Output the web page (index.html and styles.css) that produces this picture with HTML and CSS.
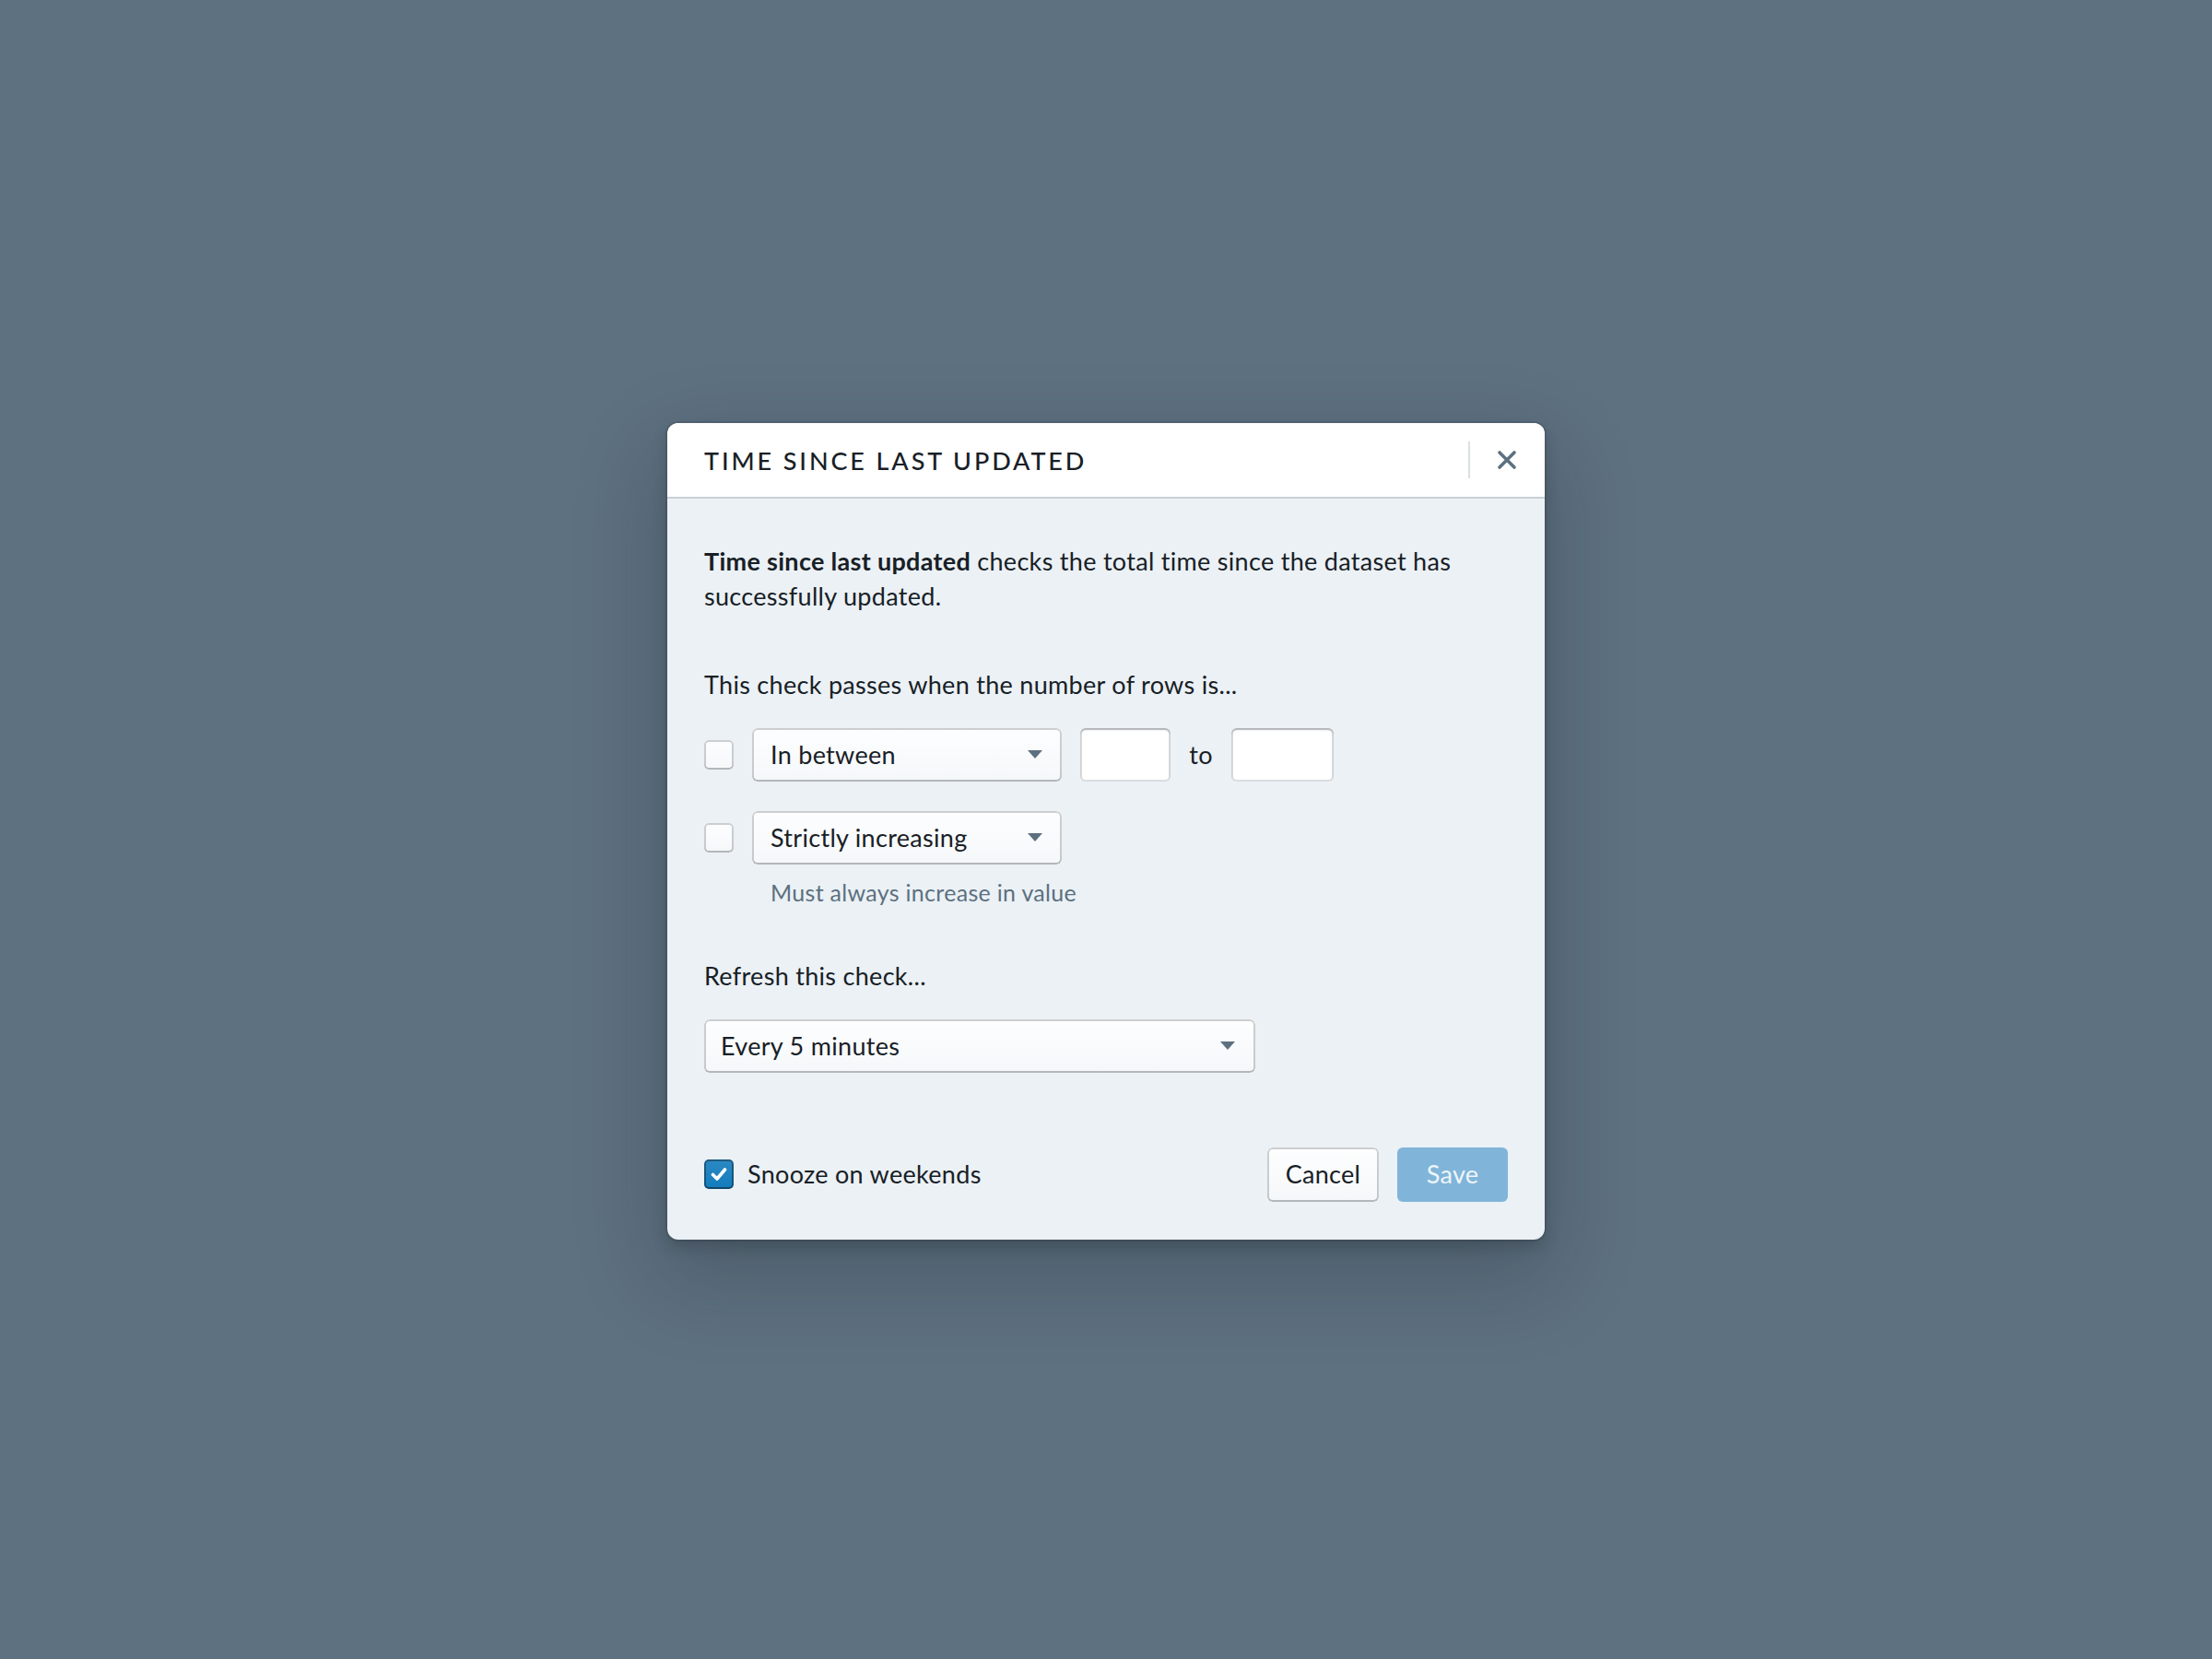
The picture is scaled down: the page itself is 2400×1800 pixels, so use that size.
FILE: index.html
```html
<!DOCTYPE html>
<html>
<head>
    <meta charset="utf-8" />
    <title>Time since last updated</title>
    <meta name="viewport" content="width=device-width, initial-scale=1">
    <link rel="stylesheet" href="styles.css">
</head>
<body>
    <div class="dialog">
        <div class="dialog-header">
            <div class="dialog-title">TIME SINCE LAST UPDATED</div>
            <div class="header-divider"></div>
            <div class="close-btn">
                <svg width="22" height="22" viewBox="0 0 22 22">
                    <path d="M3 3 L19 19 M19 3 L3 19" stroke="#5c7080" stroke-width="3.6" stroke-linecap="round" fill="none"/>
                </svg>
            </div>
        </div>
        <div class="dialog-body">
            <p class="intro"><b>Time since last updated</b> checks the total time since the dataset has successfully updated.</p>

            <div class="label first">This check passes when the number of rows is...</div>

            <div class="check-row">
                <span class="checkbox"></span>
                <div class="select">
                    <span>In between</span>
                    <span class="caret"></span>
                </div>
                <div class="input small"></div>
                <span class="to">to</span>
                <div class="input medium"></div>
            </div>
            <div class="check-row second">
                <span class="checkbox"></span>
                <div class="select">
                    <span>Strictly increasing</span>
                    <span class="caret"></span>
                </div>
            </div>
            <div class="help">Must always increase in value</div>

            <div class="label refresh">Refresh this check...</div>
            <div class="select wide">
                <span>Every 5 minutes</span>
                <span class="caret"></span>
            </div>

            <div class="dialog-footer">
                <div class="snooze">
                    <span class="checkbox checked">
                        <svg width="22" height="22" viewBox="0 0 22 22">
                            <path d="M4.5 11.5 L9 16 L17.5 6" stroke="#fff" stroke-width="3.6" stroke-linecap="round" stroke-linejoin="round" fill="none"/>
                        </svg>
                    </span>
                    <span>Snooze on weekends</span>
                </div>
                <div class="actions">
                    <div class="btn">Cancel</div>
                    <div class="btn primary disabled">Save</div>
                </div>
            </div>
        </div>
    </div>
</body>
</html>
```

FILE: styles.css
```css
*{
    margin: 0;
    padding: 0;
    box-sizing: border-box;
}
body{
    background: #5e7181;
    min-height: 100vh;
    padding-top: 3px;
    display: flex;
    align-items: center;
    justify-content: center;
    font-family: Lato, "Liberation Sans", sans-serif;
    color: #182026;
}
.dialog{
    width: 952px;
    background: #ebf1f5;
    border-radius: 12px;
    box-shadow: 0 0 0 2px rgba(16,22,26,0.1), 0 8px 16px rgba(16,22,26,0.2), 0 36px 92px 12px rgba(16,22,26,0.2);
    overflow: hidden;
}
.dialog-header{
    height: 80px;
    background: #fff;
    box-shadow: 0 2px 0 rgba(16,22,26,0.15);
    display: flex;
    align-items: center;
    padding: 0 19px 0 40px;
    position: relative;
}
.dialog-title{
    flex: 1;
    font-size: 27px;
    letter-spacing: 2.9px;
    font-weight: 500;
    padding-top: 2px;
}
.header-divider{
    width: 2px;
    height: 40px;
    background: #dbe0e4;
    margin-right: 18px;
}
.close-btn{
    width: 44px;
    height: 44px;
    display: flex;
    align-items: center;
    justify-content: center;
}
.dialog-body{
    padding: 51px 40px 41px 40px;
    font-size: 27px;
    letter-spacing: 0.3px;
    line-height: 38px;
}
.intro b{
    font-weight: 700;
}
.label.first{
    margin-top: 58px;
}
.check-row{
    display: flex;
    align-items: center;
    margin-top: 28px;
}
.check-row.second{
    margin-top: 32px;
}
.checkbox{
    width: 32px;
    height: 32px;
    border-radius: 5px;
    background: #f5f8fa linear-gradient(to bottom, rgba(255,255,255,0.8), rgba(255,255,255,0));
    box-shadow: inset 0 0 0 2px rgba(16,22,26,0.2), inset 0 -2px 0 rgba(16,22,26,0.1);
    margin-right: 20px;
    flex-shrink: 0;
    display: flex;
    align-items: center;
    justify-content: center;
}
.checkbox.checked{
    background: #137cbd linear-gradient(to bottom, rgba(255,255,255,0.1), rgba(255,255,255,0));
    box-shadow: inset 0 0 0 2px rgba(16,22,26,0.4), inset 0 -2px 0 rgba(16,22,26,0.2);
}
.select{
    width: 336px;
    height: 58px;
    border-radius: 6px;
    background: #f5f8fa linear-gradient(to bottom, rgba(255,255,255,0.8), rgba(255,255,255,0));
    box-shadow: inset 0 0 0 2px rgba(16,22,26,0.2), inset 0 -2px 0 rgba(16,22,26,0.1);
    display: flex;
    align-items: center;
    justify-content: space-between;
    padding: 0 21px 0 20px;
}
.select.wide{
    width: 598px;
    margin-top: 28px;
    padding: 0 22px 0 18px;
}
.caret{
    width: 0;
    height: 0;
    border-left: 8px solid transparent;
    border-right: 8px solid transparent;
    border-top: 9px solid #5c7080;
}
.input{
    height: 58px;
    background: #fff;
    border-radius: 6px;
    box-shadow: inset 0 0 0 2px rgba(16,22,26,0.15), inset 0 2px 2px rgba(16,22,26,0.2);
    margin-left: 20px;
}
.input.small{
    width: 98px;
}
.input.medium{
    width: 111px;
    margin-left: 0;
}
.to{
    width: 66px;
    text-align: center;
}
.help{
    margin-top: 15px;
    padding-left: 72px;
    font-size: 25px;
    letter-spacing: 0.3px;
    line-height: 30px;
    color: #5c7080;
}
.label.refresh{
    margin-top: 57px;
}
.dialog-footer{
    margin-top: 81px;
    display: flex;
    align-items: center;
    justify-content: space-between;
}
.snooze{
    display: flex;
    align-items: center;
}
.snooze .checkbox{
    margin-right: 15px;
}
.actions{
    display: flex;
    gap: 20px;
}
.btn{
    height: 59px;
    width: 121px;
    border-radius: 6px;
    display: flex;
    align-items: center;
    justify-content: center;
    background: #f5f8fa linear-gradient(to bottom, rgba(255,255,255,0.8), rgba(255,255,255,0));
    box-shadow: inset 0 0 0 2px rgba(16,22,26,0.2), inset 0 -2px 0 rgba(16,22,26,0.1);
}
.btn.primary.disabled{
    width: 120px;
    background: #80b5d9;
    box-shadow: none;
    color: #eef5fa;
}
```
